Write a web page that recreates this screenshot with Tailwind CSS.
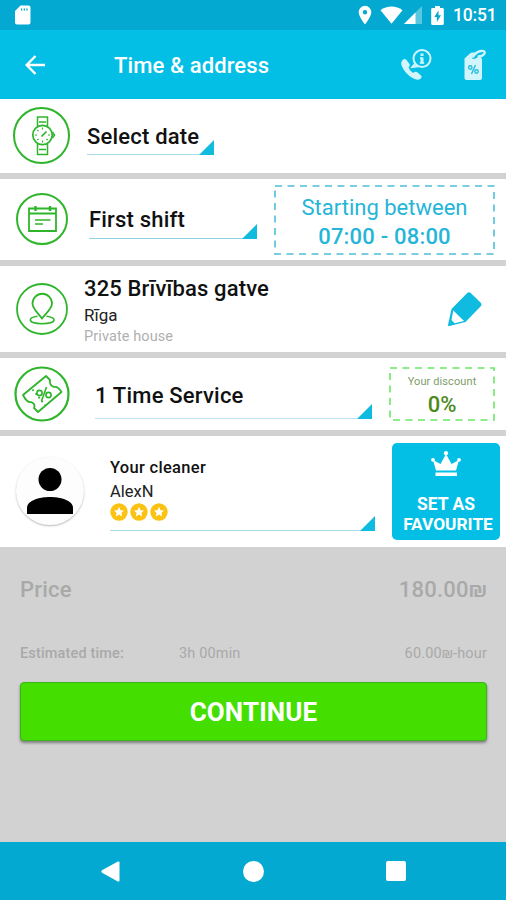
<!DOCTYPE html>
<html lang="en">
  <head>
    <meta charset="UTF-8">
    <meta name="viewport" content="width=device-width, initial-scale=1.0">
    <title>Time &amp; address</title>
    <script src="https://cdn.jsdelivr.net/npm/@tailwindcss/browser@4"></script>
  </head>
  <body class="bg-[#d2d2d2] font-[Roboto,'Open_Sans',sans-serif] text-[#111]">
    <div class="w-[506px] h-[900px] flex flex-col overflow-hidden">

      <!-- status bar -->
      <div class="h-[30px] shrink-0 bg-[#03a9d0] flex items-center pl-[14px] pr-[10px] text-white">
        <svg class="w-[18px] h-5" viewBox="0 0 18 20" fill="currentColor"><path fill-rule="evenodd" d="M6.500 .5H14.500Q16.500 .5 16.500 2.500V17.500Q16.500 19.500 14.500 19.500H3Q1 19.500 1 17.500V6ZM7 3.500V5.500H8.300V3.500ZM9.700 3.500V5.500H11V3.500ZM12.300 3.500V5.500H13.600V3.500Z"/></svg>
        <svg class="ml-auto w-[14px] h-5" viewBox="0 0 14 20" fill="currentColor"><path fill-rule="evenodd" d="M7 .8A6.300 6.300 0 0 0 .7 7.100C.7 11.800 7 19.500 7 19.500S13.300 11.800 13.300 7.100A6.300 6.300 0 0 0 7 .8ZM7 5A2.200 2.200 0 1 1 7 9.400A2.200 2.200 0 0 1 7 5Z"/></svg>
        <svg class="ml-[8px] w-[23px] h-[18px]" viewBox="0 0 23 18" fill="currentColor"><path d="M.5 4.200C6.800-.6 16.200-.6 22.500 4.200L11.500 17.700Z"/></svg>
        <svg class="ml-[1px] w-[18px] h-[18px]" viewBox="0 0 18 18" fill="currentColor"><path opacity=".35" d="M18 0V18H0Z"/><path d="M11.500 6.500V18H0Z"/></svg>
        <svg class="ml-[9px] w-[13px] h-[19px]" viewBox="0 0 13 19" fill="currentColor"><path fill-rule="evenodd" d="M4 0H9V2H11.500Q12.800 2 12.800 3.300V17.700Q12.800 19 11.500 19H1.500Q.2 19 .2 17.700V3.300Q.2 2 1.500 2H4ZM7.500 4.500L3.300 11H5.900V16L10 9.300H7.500Z"/></svg>
        <span class="ml-[9px] w-[43px] text-[17.500px] tracking-[-0.2px] font-medium leading-none whitespace-nowrap pt-[2px]">10:51</span>
      </div>

      <!-- app bar -->
      <header class="h-[69px] shrink-0 bg-[#03bfe5] flex items-center pl-[25px] pr-[20px] text-white">
        <svg class="w-5 h-5" viewBox="0 0 20 20" fill="none" stroke="currentColor" stroke-width="2.400"><path d="M20 10H2M10.500 1L1.700 10L10.500 19"/></svg>
        <h1 class="ml-[69px] mt-[2px] text-[22px] tracking-[0.1px] font-medium leading-7 whitespace-nowrap">Time &amp; address</h1>
        <svg class="ml-auto w-8 h-8 text-[#d2f5fc]" viewBox="0 0 32 32" fill="none" stroke="currentColor">
          <path fill="currentColor" stroke="none" d="M2.300 11.500Q4.500 8.800 6.500 11L9.500 15Q10.300 16.500 8.500 18.500Q9.500 21.500 13 24Q15.500 22 17 23L21 26.500Q22.500 28 20.500 29.800Q17.500 32.200 12.500 29Q5 24.500 2 17.500Q.3 13.500 2.300 11.500Z"/>
          <circle cx="22" cy="9.500" r="8.500" stroke-width="2"/>
          <path stroke-width="2" d="M15.500 14.500L12.500 18L18.500 17.200"/>
          <path stroke-width="3" d="M22 4.500V7M22 8.500V14.500"/><path stroke-width="1.300" d="M20 9H22M19.800 14H24.200"/>
        </svg>
        <svg class="ml-[31px] w-[23px] h-[32px] text-[#d2f5fc]" viewBox="0 0 23 32" fill="none" stroke="currentColor">
          <path fill="currentColor" stroke="none" d="M7 4.500Q8 3.500 9.500 3.500H13L9 7.500Q8.500 10 11 10L17 7.500L19 10V29Q19 31 17 31H3.500Q1.500 31 1.500 29V9.500Z"/>
          <path stroke-width="2.400" d="M9.500 8.500Q13 2.500 18 2Q22.500 1.500 21.500 4.500Q19.500 8 14.500 7.500"/>
          <g stroke="#25bddb" stroke-width="1.400"><path d="M12.500 16L8.500 25"/><circle cx="7.300" cy="18.500" r="1.700"/><circle cx="13.500" cy="22.500" r="1.700"/></g>
        </svg>
      </header>

      <main class="shrink-0 flex flex-col gap-[6px]">

        <!-- date -->
        <section class="h-[74px] bg-white flex items-center pl-[13px]">
          <svg class="w-[57px] h-[57px] shrink-0 -mt-px" viewBox="0 0 57 57" fill="none" stroke="#2fb52b">
            <circle cx="28.500" cy="28.500" r="27.500" stroke-width="2"/>
            <circle cx="29.500" cy="28" r="9.700" stroke-width="1.700"/>
            <path stroke-width="1.500" d="M24.500 19.500V10H34.500V19.500M26 15H33M24.500 36.500V47.500H34.500V36.500M26 42.500H33M39.500 25L41.500 28L39.500 31"/>
            <path stroke-width="1.700" d="M28.500 29.500L33.500 24.500"/>
            <path stroke-width="1.200" d="M29.500 20.500V22.500M29.500 33.500V35.500M22 28H24M35 28H37M24.300 22.800L25.500 24M33.500 32L34.700 33.200M25.500 32L24.300 33.200"/>
          </svg>
          <div class="ml-[17px] w-[127px] h-[34px] mt-1 border-b border-[#a9dbe8] flex items-end justify-between">
            <span class="text-[22px] tracking-[0.2px] font-medium leading-7 whitespace-nowrap pb-[3px] -mr-4">Select date</span>
            <svg class="w-[15px] h-[15px] -mb-px shrink-0" viewBox="0 0 15 15"><path fill="#0fbce0" d="M15 0V15H0Z"/></svg>
          </div>
        </section>

        <!-- shift -->
        <section class="h-[81px] bg-white flex items-center pl-[16px] pr-[11px]">
          <svg class="w-[52px] h-[52px] shrink-0 -mt-px" viewBox="0 0 52 52" fill="none" stroke="#2fb52b">
            <circle cx="26" cy="26" r="25" stroke-width="2"/>
            <path stroke-width="1.800" d="M13 15.500H40V38H13ZM13 20.500H40"/>
            <path stroke-width="2.400" d="M19.500 13V18M34 13V18"/>
            <path stroke-width="1.600" d="M19 27H34.500M19 31H27"/>
          </svg>
          <div class="ml-[21px] w-[168px] h-[36px] mt-[3px] border-b border-[#8fd3e5] flex items-end justify-between">
            <span class="text-[22px] tracking-[0.2px] font-medium leading-7 whitespace-nowrap pb-[4px]">First shift</span>
            <svg class="w-[15px] h-[15px] -mb-px shrink-0" viewBox="0 0 15 15"><path fill="#0fbce0" d="M15 0V15H0Z"/></svg>
          </div>
          <div class="relative ml-auto w-[221px] h-[70px] flex flex-col items-center pt-[8px] text-[#25b5d8]">
            <svg class="absolute inset-0 w-full h-full" viewBox="0 0 221 70" fill="none" stroke="#4dbfd9" stroke-width="1.600" stroke-dasharray="7 5.500"><path d="M1 1H220V69H1Z"/></svg>
            <p class="text-[22px] leading-[29px] whitespace-nowrap">Starting between</p>
            <p class="text-[22px] tracking-[0.2px] leading-[30px] font-medium whitespace-nowrap">07:00 - 08:00</p>
          </div>
        </section>

        <!-- address -->
        <section class="h-[86px] bg-white flex items-center pl-[16px] pr-[24px]">
          <svg class="w-[52px] h-[52px] shrink-0" viewBox="0 0 52 52" fill="none" stroke="#2fb52b">
            <circle cx="26" cy="26" r="25" stroke-width="1.800"/>
            <path stroke-width="1.800" d="M26 35.500C22.500 30.500 16.500 26 16.500 20.500A9.700 9.700 0 0 1 36 20.500C36 26 29.500 30.500 26 35.500Z"/>
            <path stroke-width="1.600" d="M21.500 33.200C11 34.500 11.500 40.500 26 40.700C41 40.500 41.500 34.500 30.500 33.200"/>
          </svg>
          <div class="ml-[16px] mt-[3px]">
            <p class="text-[22px] tracking-[0.15px] font-medium leading-7 whitespace-nowrap">325 Brīvības gatve</p>
            <p class="text-[17px] leading-6 text-[#222]">Rīga</p>
            <p class="text-[14.500px] tracking-[0.1px] leading-[20px] text-[#b0b0b0]">Private house</p>
          </div>
          <svg class="ml-auto w-[34px] h-[34px]" viewBox="0 0 34 34"><path fill="#0fbce0" d="M19.500 .8Q21 -.3 22.500 .8L33 11Q34 12.500 33 14L17.500 30L1.500 34Q0 34.500 0 33L3.500 17Z"/><path fill="#fff" d="M5.300 18.500L16 29L6.500 31.300L3.500 28Z"/></svg>
        </section>

        <!-- service -->
        <section class="h-[72px] bg-white flex items-center pl-[14px] pr-[11px]">
          <svg class="w-[56px] h-[56px] shrink-0" viewBox="0 0 56 56" fill="none" stroke="#2fb52b">
            <circle cx="28" cy="28" r="26.500" stroke-width="2.200"/>
            <path stroke-width="1.800" stroke-linejoin="round" d="M9 29L32 10L36 14Q35 19 40 21Q44 20 47.500 26L24 46L20 42Q22 38 17 36Q13 37 9 29Z"/>
            <path stroke-width="1.800" stroke-dasharray="1.800 3" d="M18.500 23.500L31 39"/>
            <path stroke-width="1.600" d="M32.500 21L27.500 35"/>
            <circle cx="25.500" cy="27" r="2.600" stroke-width="1.600"/>
            <circle cx="34.500" cy="29" r="2.600" stroke-width="1.600"/>
          </svg>
          <div class="ml-[25px] w-[277px] h-[38px] mt-[11px] border-b border-[#c0e4ed] flex items-end justify-between">
            <span class="text-[22px] tracking-[0.2px] font-medium leading-7 whitespace-nowrap pb-[8px]">1 Time Service</span>
            <svg class="w-[15px] h-[15px] -mb-px shrink-0" viewBox="0 0 15 15"><path fill="#0fbce0" d="M15 0V15H0Z"/></svg>
          </div>
          <div class="relative ml-auto w-[106px] h-[54px] flex flex-col items-center pt-[6px] text-[#4c8a1c]">
            <svg class="absolute inset-0 w-full h-full" viewBox="0 0 106 54" fill="none" stroke="#6ae866" stroke-width="1.600" stroke-dasharray="7 5.500"><path d="M1 1H105V53H1Z"/></svg>
            <p class="text-[11px] tracking-[0.1px] leading-[17px] text-[#7f9c6c] whitespace-nowrap">Your discount</p>
            <p class="text-[22px] leading-[30px] font-medium">0%</p>
          </div>
        </section>

        <!-- cleaner -->
        <section class="h-[111px] bg-white flex items-center pl-[16px] pr-[6px]">
          <div class="w-[68px] h-[68px] shrink-0 -mt-px rounded-full bg-[#fdfdfd] shadow-[0_1px_2px_rgba(0,0,0,0.28)] flex items-center justify-center">
            <svg class="w-[46px] h-[46px]" viewBox="0 0 46 46"><circle cx="23" cy="11.500" r="11.500"/><path d="M0 46V40C0 32.500 12 29 23 29S46 32.500 46 40V46Z"/></svg>
          </div>
          <div class="ml-[26px] w-[265px] h-[75px] mt-[3px] border-b border-[#a9dbe8] flex items-end justify-between">
            <div class="self-start">
              <p class="text-[16.500px] tracking-[0.3px] leading-6 font-medium">Your cleaner</p>
              <p class="text-[16.500px] leading-[23px] text-[#222]">AlexN</p>
              <div class="flex gap-[2px]">
                <svg class="w-[18px] h-[18px]" viewBox="0 0 18 18"><circle cx="9" cy="9" r="8.700" fill="#fcc211"/><path fill="#fff" d="M9 3.800L10.500 7.200L14 7.500L11.400 9.900L12.200 13.500L9 11.600L5.800 13.500L6.600 9.900L4 7.500L7.500 7.200Z"/></svg>
                <svg class="w-[18px] h-[18px]" viewBox="0 0 18 18"><circle cx="9" cy="9" r="8.700" fill="#fcc211"/><path fill="#fff" d="M9 3.800L10.500 7.200L14 7.500L11.400 9.900L12.200 13.500L9 11.600L5.800 13.500L6.600 9.900L4 7.500L7.500 7.200Z"/></svg>
                <svg class="w-[18px] h-[18px]" viewBox="0 0 18 18"><circle cx="9" cy="9" r="8.700" fill="#fcc211"/><path fill="#fff" d="M9 3.800L10.500 7.200L14 7.500L11.400 9.900L12.200 13.500L9 11.600L5.800 13.500L6.600 9.900L4 7.500L7.500 7.200Z"/></svg>
              </div>
            </div>
            <svg class="w-[15px] h-[15px] -mb-px shrink-0" viewBox="0 0 15 15"><path fill="#0fbce0" d="M15 0V15H0Z"/></svg>
          </div>
          <button type="button" class="ml-auto w-[108px] h-[97px] rounded-[5px] bg-[#03bfe5] text-white flex flex-col items-center pt-[8px]">
            <svg class="w-[30px] h-[26px]" viewBox="0 0 30 26" fill="currentColor"><path d="M5 19.500L2 9L9.500 13L15 3L20.500 13L28 9L25 19.500ZM4.500 21.500H26V25H4.500Z"/><circle cx="2" cy="8.800" r="1.900"/><circle cx="15" cy="2.200" r="2.100"/><circle cx="28" cy="8.800" r="1.900"/></svg>
            <span class="mt-[17px] text-[17.500px] leading-5 font-bold whitespace-nowrap">SET AS</span>
            <span class="ml-[4px] text-[17.300px] leading-5 font-bold whitespace-nowrap">FAVOURITE</span>
          </button>
        </section>
      </main>

      <!-- price -->
      <div class="flex-1 pl-[20px] pr-[19px] pt-[28px] text-[#a9a9a9]">
        <div class="flex justify-between text-[22px] tracking-[0.2px] font-medium leading-[30px]">
          <span>Price</span>
          <span>180.00₪</span>
        </div>
        <div class="mt-[39px] flex items-center text-[14.500px] tracking-[0.15px] leading-5">
          <span class="w-[159px] font-medium">Estimated time:</span>
          <span>3h 00min</span>
          <span class="ml-auto">60.00₪-hour</span>
        </div>
        <button type="button" class="mt-[18px] w-full h-[59px] pt-[2px] rounded-[4px] border border-[#3cb51a] bg-[#44df00] shadow-[0_2px_3px_rgba(0,0,0,0.4)] text-white text-[26px] tracking-[0.1px] font-bold">CONTINUE</button>
      </div>

      <!-- navigation bar -->
      <nav class="h-[58px] shrink-0 bg-[#03a9d0] text-white flex items-center justify-between pl-[101px] pr-[100px]">
        <svg class="w-[19px] h-[21px]" viewBox="0 0 19 21" fill="currentColor"><path d="M1 9.300L16.800 .6Q18.500 0 18.500 1.500V19.500Q18.500 21 16.800 20.400L1 11.700Q-.3 10.500 1 9.300Z"/></svg>
        <div class="w-[21px] h-[21px] rounded-full bg-white"></div>
        <div class="w-[20px] h-[20px] rounded-[2px] bg-white"></div>
      </nav>
    </div>
  </body>
</html>
